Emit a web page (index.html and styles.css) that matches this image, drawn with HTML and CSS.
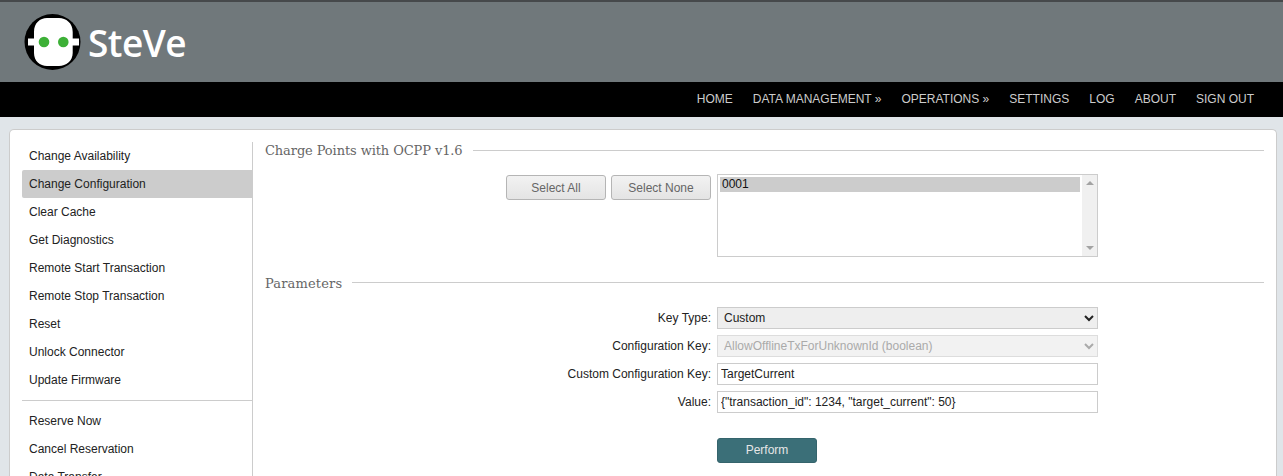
FILE: index.html
```html
<!doctype html>
<html lang="en">
  <head>
    <meta charset="utf-8" />
    <title>SteVe - Change Configuration</title>
    <link rel="stylesheet" href="styles.css">
  </head>

  <body>
    <div class="page">
      <header class="top-banner">
        <a class="logo" href="#">
          <svg class="logo-icon" width="60" height="60" viewBox="0 0 60 60">
            <circle cx="29.500" cy="30" r="28" fill="#000" />
            <path d="M11 26.500 V20 C11 11 17 6 24 6 H36 C43 6 49.700 11 49.700 20 V26.500 H56 V33.500 H49.700 V41 C49.700 49 43 54 36 54 H24 C17 54 11 49 11 41 V33.500 H5 V26.500 Z" fill="#fff" />
            <circle cx="21" cy="30" r="5.300" fill="#3db037" />
            <circle cx="40.300" cy="30" r="5.300" fill="#3db037" />
          </svg>
          <span class="logo-text">SteVe</span>
        </a>
      </header>

      <nav class="top-menu">
        <a href="#">HOME</a>
        <a href="#">DATA MANAGEMENT &raquo;</a>
        <a href="#">OPERATIONS &raquo;</a>
        <a href="#">SETTINGS</a>
        <a href="#">LOG</a>
        <a href="#">ABOUT</a>
        <a href="#">SIGN OUT</a>
      </nav>

      <main class="content">
        <aside class="side-menu">
          <ul>
            <li>Change Availability</li>
            <li class="active">Change Configuration</li>
            <li>Clear Cache</li>
            <li>Get Diagnostics</li>
            <li>Remote Start Transaction</li>
            <li>Remote Stop Transaction</li>
            <li>Reset</li>
            <li>Unlock Connector</li>
            <li>Update Firmware</li>
          </ul>
          <hr />
          <ul>
            <li>Reserve Now</li>
            <li>Cancel Reservation</li>
            <li>Data Transfer</li>
            <li>Get Configuration</li>
          </ul>
        </aside>

        <section class="op-form">
          <div class="section-title cp-title"><span>Charge Points with OCPP v1.6</span></div>
          <div class="cp-row">
            <button class="btn-grey">Select All</button>
            <button class="btn-grey">Select None</button>
            <div class="cp-box">
              <select class="cp-list" multiple size="5">
                <option selected>0001</option>
              </select>
              <div class="cp-scroll">
                <span class="arrow-up"></span>
                <span class="arrow-down"></span>
              </div>
            </div>
          </div>

          <div class="section-title params-title"><span>Parameters</span></div>
          <div class="param-grid">
            <label>Key Type:</label>
            <select class="field field-select">
              <option>Custom</option>
            </select>
            <label>Configuration Key:</label>
            <select class="field field-select" disabled>
              <option>AllowOfflineTxForUnknownId (boolean)</option>
            </select>
            <label>Custom Configuration Key:</label>
            <input class="field" type="text" value="TargetCurrent" />
            <label>Value:</label>
            <input class="field" type="text" value='{"transaction_id": 1234, "target_current": 50}' />
          </div>
          <div class="submit-row">
            <button class="btn-perform">Perform</button>
          </div>
        </section>
      </main>
    </div>
  </body>
</html>
```

FILE: styles.css
```css
html,
body {
  margin: 0;
  padding: 0;
  height: 100%;
  overflow: hidden;
}
body {
  background: #e0e5e9;
  font-family: "Liberation Sans", Arial, sans-serif;
  font-size: 12px;
  color: #222;
}
a {
  text-decoration: none;
}
.page {
  height: 476px;
  overflow: hidden;
}
.top-banner {
  height: 80px;
  background: #70787b;
  border-top: 2px solid #46494b;
  display: flex;
  align-items: center;
}
.logo {
  display: flex;
  align-items: center;
  margin-left: 23px;
  color: #fff;
}
.logo-icon {
  display: block;
}
.logo-text {
  font-family: "Open Sans", sans-serif;
  font-weight: 600;
  font-size: 37px;
  letter-spacing: -0.5px;
  margin-left: 5px;
}
.top-menu {
  height: 33px;
  padding-bottom: 2px;
  background: #000;
  display: flex;
  justify-content: flex-end;
  align-items: center;
  gap: 20px;
  padding-right: 29px;
}
.top-menu a {
  color: #ccc;
  font-size: 12px;
}
.content {
  margin: 12px 6px 0 9px;
  height: 400px;
  background: #fff;
  border: 1px solid #ccc;
  border-bottom: 0;
  border-radius: 5px 5px 0 0;
  display: flex;
  padding: 12px 12px 0 12px;
}
.side-menu {
  width: 230px;
  flex: none;
  border-right: 1px solid #ccc;
}
.side-menu ul {
  list-style: none;
  margin: 0;
  padding: 0;
}
.side-menu li {
  height: 28px;
  line-height: 28px;
  padding-left: 7px;
  border-radius: 2px 0 0 2px;
}
.side-menu li.active {
  background: #ccc;
}
.side-menu hr {
  border: 0;
  border-top: 1px solid #ccc;
  margin: 6px 0;
}
.op-form {
  flex: 1;
  padding-left: 12px;
}
.section-title {
  display: flex;
  align-items: center;
  gap: 10px;
  height: 16px;
  font-family: "DejaVu Serif", serif;
  font-size: 13px;
  color: #666;
}
.section-title::after {
  content: "";
  flex: 1;
  border-top: 1px solid #ccc;
}
.cp-title {
  letter-spacing: -0.1px;
}
.cp-row {
  display: flex;
  align-items: flex-start;
  margin: 16px 0 0 241px;
}
.btn-grey {
  width: 100px;
  height: 25px;
  margin: 1px 5px 0 0;
  padding: 0;
  background: linear-gradient(#f2f2f2, #e4e4e4);
  border: 1px solid #b5b5b5;
  border-radius: 3px;
  font-family: inherit;
  font-size: 12px;
  color: #666;
}
.cp-box {
  display: flex;
  box-sizing: border-box;
  width: 381px;
  height: 83px;
  margin-left: 1px;
  border: 1px solid #ccc;
  background: #fff;
}
.cp-list {
  flex: 1;
  min-width: 0;
  margin: 0;
  padding: 2px;
  box-sizing: border-box;
  background: #fff;
  border: 0;
  outline: none;
  font-family: inherit;
  font-size: 12px;
  color: #222;
}
.cp-list option:checked {
  background: #ccc;
}
.cp-scroll {
  width: 15px;
  flex: none;
  box-sizing: border-box;
  padding: 6px 0;
  background: #f0f0f0;
  display: flex;
  flex-direction: column;
  justify-content: space-between;
  align-items: center;
}
.arrow-up,
.arrow-down {
  width: 0;
  height: 0;
  border-left: 4px solid transparent;
  border-right: 4px solid transparent;
}
.arrow-up {
  border-bottom: 4px solid #a3a3a3;
}
.arrow-down {
  border-top: 4px solid #a3a3a3;
}
.params-title {
  margin-top: 17px;
  letter-spacing: 0.15px;
}
.params-title span {
  padding-top: 2px;
}
.param-grid {
  display: grid;
  grid-template-columns: 446px 381px;
  column-gap: 6px;
  row-gap: 6px;
  margin-top: 17px;
}
.param-grid label {
  text-align: right;
  line-height: 22px;
}
.field {
  box-sizing: border-box;
  height: 22px;
  width: 381px;
  margin: 0;
  padding: 0 3px;
  background: #fff;
  border: 1px solid #ccc;
  border-radius: 0;
  font-family: inherit;
  font-size: 12px;
  color: #222;
}
.field-select {
  padding: 0 2px;
  background: #eee;
}
.field-select:disabled {
  background: #f2f2f2;
  border-color: #ddd;
  color: #aaa;
  opacity: 1;
}
.submit-row {
  margin: 25px 0 0 452px;
}
.btn-perform {
  width: 100px;
  height: 25px;
  padding: 0 0 2px;
  background: #3b6f78;
  border: 1px solid #35646c;
  border-radius: 3px;
  font-family: inherit;
  font-size: 12px;
  color: #e6e6e6;
}
```
